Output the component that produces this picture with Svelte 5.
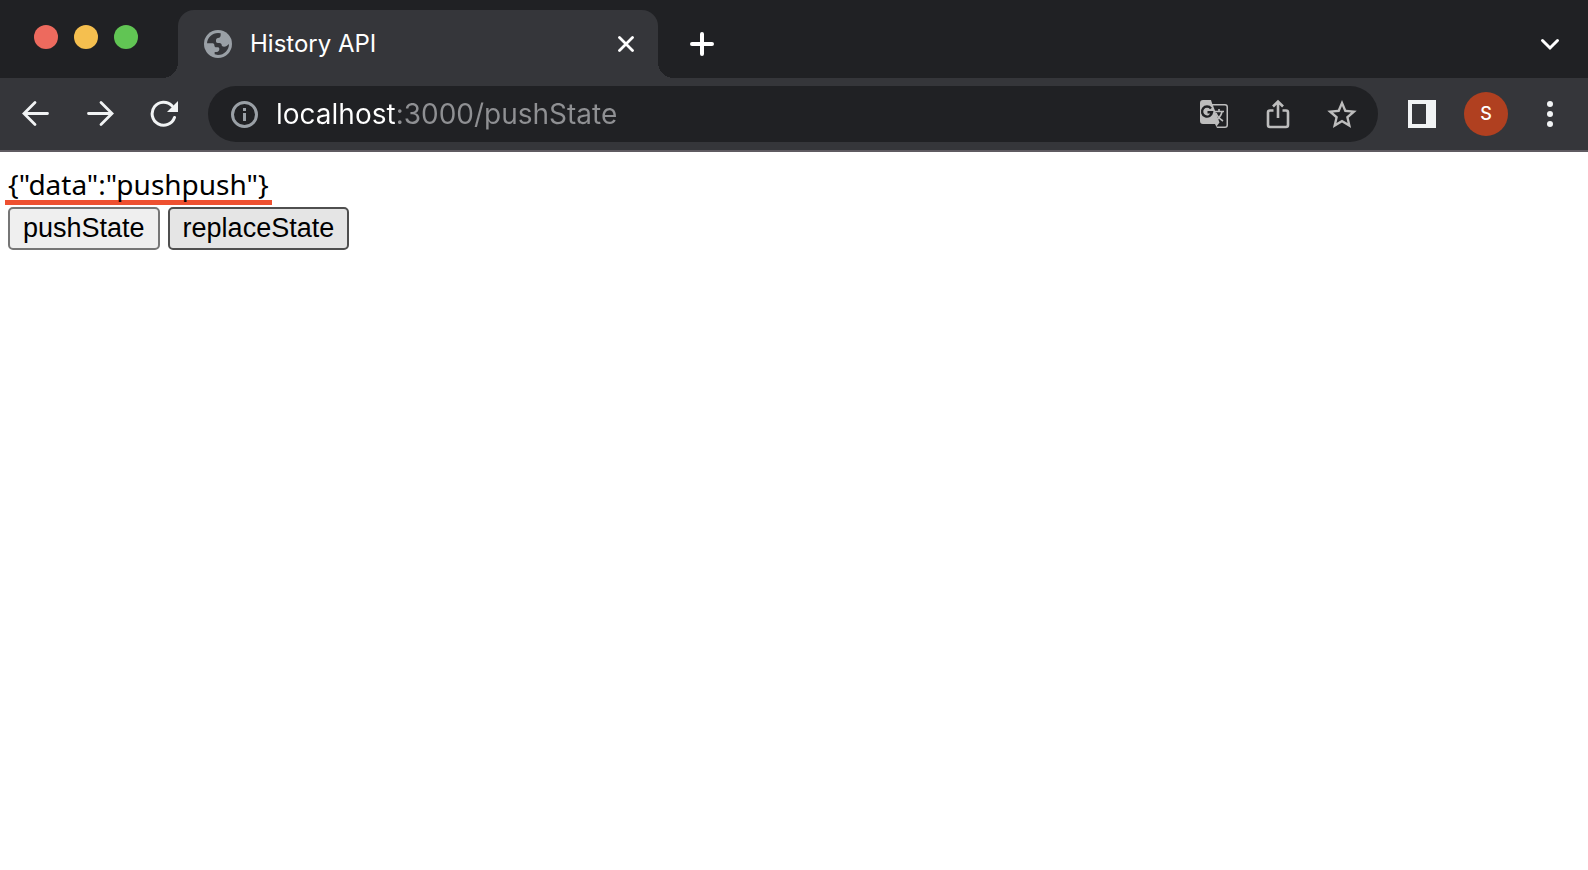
<script>
  let address = 'localhost:3000/pushState';
  let state = { data: 'pushpush' };

  function pushState() {
    state = { data: 'pushpush' };
  }

  function replaceState() {
    state = { data: 'replace' };
  }
</script>

<div class="browser">
  <header class="tab-strip">
    <div class="lights">
      <button class="light red" aria-label="Close window"></button>
      <button class="light yellow" aria-label="Minimize window"></button>
      <button class="light green" aria-label="Zoom window"></button>
    </div>

    <div class="tab">
      <svg class="favicon" viewBox="0 0 84 84" width="28" height="28">
        <circle cx="42" cy="42" r="42" fill="#9aa0a6" />
        <path d="M9 40C10 22 25 9 42 9L50 10V16C50 21 47 24 42 24C38 24 36 27 36 31V34C36 37 38 39 41 39H46C51 39 53 42 53 45C53 48 56 50 60 50C66 50 70 47 75 42C75 60 61 75 42 75L32 73V66H38C43 66 46 62 46 57C46 54 44 52 41 52H37C33 52 31 49 31 45C31 42 28 40 25 40Z" fill="#35363a" />
      </svg>
      <span class="title">History API</span>
      <button class="icon close" aria-label="Close tab">
        <svg viewBox="0 0 16 16" width="16" height="16">
          <path d="M1.5 1.5l13 13M14.5 1.5l-13 13" stroke="#fff" stroke-width="2.8" stroke-linecap="round" />
        </svg>
      </button>
    </div>

    <button class="icon" aria-label="New tab">
      <svg viewBox="0 0 24 24" width="24" height="24">
        <path d="M12 2v20M2 12h20" stroke="#fff" stroke-width="4" stroke-linecap="round" />
      </svg>
    </button>
    <button class="icon search-tabs" aria-label="Search tabs">
      <svg viewBox="0 0 20 20" width="20" height="20">
        <path d="M2.5 6.5l7.5 7.5 7.5-7.5" fill="none" stroke="#fff" stroke-width="3" stroke-linecap="round" />
      </svg>
    </button>
  </header>

  <nav class="toolbar">
    <div class="group">
      <button class="icon" aria-label="Back">
        <svg viewBox="0 0 28 28" width="28" height="28">
          <path d="M25.5 13.5H2.500M13 2.500l-11 11 11 11" fill="none" stroke="#f1f3f4" stroke-width="2.800" stroke-linecap="round" />
        </svg>
      </button>
      <button class="icon" aria-label="Forward">
        <svg viewBox="0 0 28 28" width="28" height="28">
          <path d="M2.500 13.500h23M15 2.500l11 11-11 11" fill="none" stroke="#f1f3f4" stroke-width="2.800" stroke-linecap="round" />
        </svg>
      </button>
      <button class="icon" aria-label="Reload">
        <svg viewBox="0 0 28 28" width="28" height="28">
          <path d="M24.5 17.5A11.500 11.500 0 1 1 22 5.800" fill="none" stroke="#f1f3f4" stroke-width="3" stroke-linecap="round" />
          <path d="M28 1v11H17z" fill="#f1f3f4" />
        </svg>
      </button>
    </div>

    <div class="omnibox">
      <svg class="info" viewBox="0 0 28 28" width="28" height="28">
        <circle cx="14.5" cy="14.5" r="12" fill="none" stroke="#9aa0a6" stroke-width="3" />
        <path d="M13 8h3v3h-3zM13 13h3v8h-3z" fill="#9aa0a6" />
      </svg>
      <input type="text" aria-label="Address" spellcheck="false" bind:value={address} />
      <div class="group">
        <button class="icon" aria-label="Translate this page">
          <svg viewBox="0 0 28 28" width="28" height="28">
            <path d="M3 0h8l1.300 4H25a3 3 0 0 1 3 3v18a3 3 0 0 1-3 3H17l-2-4H3a3 3 0 0 1-3-3V3a3 3 0 0 1 3-3z" fill="#bdbdbd" />
            <path d="M13 5.500h12a1.500 1.500 0 0 1 1.500 1.500v18a1.500 1.500 0 0 1-1.500 1.500h-8.500l3-4z" fill="#202124" />
            <path d="M11 8.500a5 5 0 1 0 1 3.800H7.500" fill="none" stroke="#202124" stroke-width="2.400" />
            <path d="M14 11.500h10M19 9v2.500M22 12c-1 4-4 7-7 9M16 13c1 3 4 6 7 8" fill="none" stroke="#bdbdbd" stroke-width="1.600" />
          </svg>
        </button>
        <button class="icon" aria-label="Share this page">
          <svg viewBox="0 0 28 30" width="28" height="30">
            <path d="M9.500 11.500H6a2 2 0 0 0-2 2V26a2 2 0 0 0 2 2h16a2 2 0 0 0 2-2V13.500a2 2 0 0 0-2-2h-3.500M14 19V3M9 7.500l5-5 5 5" fill="none" stroke="#bdbdbd" stroke-width="2.600" />
          </svg>
        </button>
        <button class="icon" aria-label="Bookmark this tab">
          <svg viewBox="2 2 20 19" width="30" height="28">
            <path d="M22 9.240l-7.190-.62L12 2 9.190 8.630 2 9.240l5.460 4.730L5.820 21 12 17.270 18.180 21l-1.630-7.030L22 9.240zM12 15.400l-3.760 2.270 1-4.280-3.320-2.880 4.380-.38L12 6.100l1.710 4.040 4.380.38-3.320 2.880 1 4.280L12 15.400z" fill="#bdbdbd" />
          </svg>
        </button>
      </div>
    </div>

    <div class="group">
      <button class="icon" aria-label="Side panel">
        <svg viewBox="0 0 28 28" width="28" height="28">
          <path d="M0 0h28v28H0zM4 4v20h14V4z" fill="#f1f3f4" fill-rule="evenodd" />
        </svg>
      </button>
      <button class="icon" aria-label="Profile">
        <span class="avatar">S</span>
      </button>
      <button class="icon" aria-label="Menu">
        <svg viewBox="0 0 6 26" width="6" height="26">
          <g fill="#f1f3f4">
            <circle cx="3" cy="3" r="3" />
            <circle cx="3" cy="13" r="3" />
            <circle cx="3" cy="23" r="3" />
          </g>
        </svg>
      </button>
    </div>
  </nav>

  <main>
    <div class="state">{JSON.stringify(state)}</div>
    <div class="actions">
      <button class="action" on:click={pushState}>pushState</button>
      <button class="action active" on:click={replaceState}>replaceState</button>
    </div>
  </main>
</div>

<style>
  :global(body) {
    margin: 0;
    background: #fff;
  }

  button {
    border: none;
    padding: 0;
    background: none;
    cursor: pointer;
  }

  .browser {
    font-family: Inter, "Liberation Sans", sans-serif;
  }

  .tab-strip {
    display: flex;
    align-items: flex-start;
    box-sizing: border-box;
    height: 78px;
    padding: 10px 14px 0 34px;
    background: #202124;
  }

  .lights {
    display: flex;
    gap: 16px;
    padding-top: 15px;
    margin-right: 40px;
  }

  .light {
    width: 24px;
    height: 24px;
    border-radius: 50%;
  }

  .red {
    background: #ed6a5e;
  }

  .yellow {
    background: #f5bf4f;
  }

  .green {
    background: #61c554;
  }

  .tab {
    position: relative;
    display: flex;
    align-items: center;
    box-sizing: border-box;
    width: 480px;
    height: 68px;
    padding: 0 8px 0 26px;
    margin-right: 20px;
    border-radius: 16px 16px 0 0;
    background: #35363a;
  }

  /* flared feet of the active tab */
  .tab::before,
  .tab::after {
    content: '';
    position: absolute;
    bottom: 0;
    width: 16px;
    height: 16px;
  }

  .tab::before {
    right: 100%;
    background: radial-gradient(circle at 0 0, #202124 16px, #35363a 16px);
  }

  .tab::after {
    left: 100%;
    background: radial-gradient(circle at 100% 0, #202124 16px, #35363a 16px);
  }

  .title {
    flex: 1;
    padding-bottom: 2px;
    margin-left: 18px;
    font-size: 24px;
    color: #fff;
  }

  .icon {
    display: flex;
    align-items: center;
    justify-content: center;
    flex-shrink: 0;
    width: 48px;
    height: 48px;
  }

  .tab-strip > .icon {
    margin-top: 10px;
  }

  .tab-strip > .search-tabs {
    margin-left: auto;
  }

  .toolbar {
    display: flex;
    align-items: center;
    gap: 20px;
    padding: 8px 14px 8px 12px;
    border-bottom: 2px solid #5f5b61;
    background: #35363a;
  }

  .group {
    display: flex;
    gap: 16px;
  }

  .omnibox {
    display: flex;
    align-items: center;
    flex: 1;
    height: 56px;
    padding: 0 12px 0 22px;
    border-radius: 28px;
    background: #202124;
  }

  .info {
    flex-shrink: 0;
  }

  /* host is bright, the rest of the address is dimmed */
  input {
    flex: 1;
    min-width: 0;
    height: 40px;
    padding: 0;
    margin-left: 18px;
    border: none;
    outline: none;
    font-family: inherit;
    font-size: 28px;
    color: transparent;
    caret-color: #fff;
    background: linear-gradient(to right, #fff 120px, #8f9093 120px);
    background-clip: text;
  }

  .avatar {
    width: 44px;
    border-radius: 50%;
    font-family: Inter, sans-serif;
    font-size: 18px;
    font-weight: 500;
    line-height: 44px;
    color: #fff;
    background: #b04020;
  }

  main {
    padding: 16px 8px;
  }

  .state {
    width: fit-content;
    padding: 0 3px;
    margin-left: -3px;
    border-bottom: 5px solid #ee5030;
    font-family: "Noto Sans", sans-serif;
    font-size: 28px;
    line-height: 32px;
    color: #000;
  }

  .actions {
    display: flex;
    gap: 8px;
    margin-top: 2px;
  }

  .action {
    height: 43px;
    padding: 0 13px;
    border: 2px solid #767676;
    border-radius: 5px;
    font-family: "Liberation Sans", Arial, sans-serif;
    font-size: 27px;
    color: #000;
    background: #efefef;
  }

  .active {
    border-color: #4f4f4f;
    background: #e5e5e5;
  }
</style>
